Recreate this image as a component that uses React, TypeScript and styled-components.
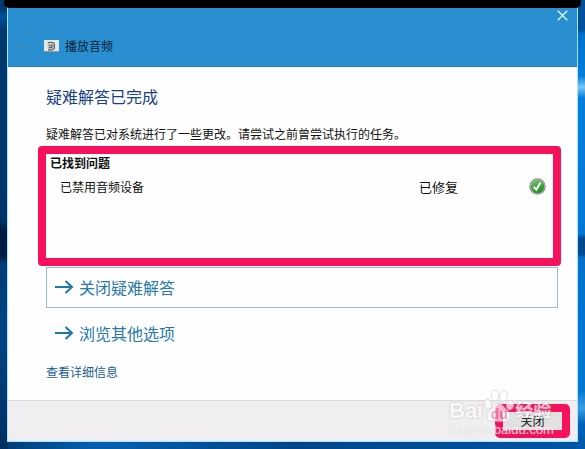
import React from "react";
import styled, { createGlobalStyle } from "styled-components";

const GlobalStyle = createGlobalStyle`
  *, *::before, *::after { box-sizing: border-box; }
  body {
    margin: 0;
    font-family: "Noto Sans CJK SC", sans-serif;
    font-size: 12px;
    line-height: 18px;
    color: #111;
  }
  h1, h2, p { margin: 0; }
  button { font: inherit; }
`;

const Desktop = styled.div`
  position: relative;
  display: flex;
  min-height: 100vh;
  padding: 7px;
  background:
    linear-gradient(180deg, #003a70 0, #003a70 10px, #00539b 16px, #00396f 30px, #003468 220px, #001c44 230px, #001c44 256px, #003c78 264px, #004384 340px, #002f60 449px) left / 8px 100% no-repeat,
    linear-gradient(180deg, #004f9a 0, #00509c 30px, #0070cc 34px, #0080dc 76px, #7cc4f2 87px, #0080dc 98px, #0078d6 234px, #004a90 238px, #004a90 254px, #0072ce 258px, #0078d4 390px, #3c9ce4 408px, #0060ba 424px, #0058ac 449px) right / 8px 100% no-repeat,
    linear-gradient(90deg, #003a74, #0660ae 16%, #00458a 50%, #0055a4);
`;

const TopEdge = styled.div`
  position: absolute;
  top: 0;
  left: 4px;
  right: 4px;
  height: 8px;
  border-radius: 0 0 5px 5px;
  background: #000;
`;

const Dialog = styled.main`
  display: flex;
  flex: 1;
  flex-direction: column;
  min-width: 0;
  border: 1px solid #a5e4fa;
  border-top: 0;
  background: #fefefe;
`;

const TitleBar = styled.header`
  display: flex;
  justify-content: space-between;
  height: 60px;
  background: #2a8fd0;
  border-bottom: 1px solid #2680b8;
`;

const TitleGroup = styled.div`
  display: flex;
  align-items: center;
  align-self: flex-end;
  height: 40px;
  padding-left: 8px;
`;

const IconButton = styled.button`
  display: grid;
  place-items: center;
  width: 30px;
  height: 17px;
  padding: 0;
  border: 0;
  background: none;
`;

const BackButton = styled(IconButton)`
  width: 12px;
  margin-right: 16px;
`;

const Title = styled.h1`
  margin-left: 6px;
  font-size: 12px;
  font-weight: 400;
  line-height: 18px;
  color: #0a2238;
`;

const Content = styled.section`
  display: flex;
  flex: 1;
  flex-direction: column;
  align-items: stretch;
  padding: 17px 19px 0 38px;
`;

const Heading = styled.h2`
  font-size: 16px;
  font-weight: 400;
  line-height: 24px;
  color: #173f86;
`;

const Message = styled.p`
  margin-top: 17px;
`;

const Problems = styled.div`
  height: 120px;
  margin: 3px -3px 0 -8px;
  border: 8px solid #f6115c;
  border-radius: 4px;
`;

const ProblemsTable = styled.table`
  width: 100%;
  border-collapse: collapse;
  text-align: left;

  th { padding: 0 4px; line-height: 18px; }
  td { padding: 3px 0 0; height: 26px; }
`;

const ProblemName = styled.td`
  && { padding-left: 14px; }
`;

const Status = styled.td`
  width: 110px;
  font-size: 13px;
`;

const StatusIcon = styled.td`
  width: 24px;

  svg { display: block; }
`;

const CommandLink = styled.button<{ $focused?: boolean }>`
  display: flex;
  align-items: center;
  gap: 5px;
  height: 41px;
  padding: 0 7px 2px;
  border: 1px solid ${(p) => (p.$focused ? "#9dbdce" : "transparent")};
  background: none;
  font-size: 16px;
  line-height: 24px;
  color: #2878a8;
`;

const Commands = styled.div`
  display: flex;
  flex-direction: column;
  gap: 5px;
  margin-top: 1px;
`;

const DetailsLink = styled.a`
  align-self: flex-start;
  margin-top: 9px;
  color: #1c5f93;
  text-decoration: none;
`;

const Footer = styled.footer`
  position: relative;
  display: flex;
  justify-content: flex-end;
  align-items: flex-start;
  height: 41px;
  padding: 3px 7px 0 0;
  border-top: 1px solid #dcdcde;
  background: #f0eef1;
`;

const CloseButton = styled.button`
  width: 75px;
  height: 34px;
  padding: 0;
  border: 8px solid #f6115c;
  border-radius: 5px;
  background: #e2e1e2;
  line-height: 16px;
  color: #111;
`;

const Watermark = styled.div`
  position: absolute;
  right: 14px;
  bottom: 4px;
  width: 114px;
  pointer-events: none;
  font-family: "Liberation Sans", "Noto Sans CJK SC", sans-serif;
  color: #fff;
  opacity: 0.7;
`;

const Brand = styled.div`
  display: flex;
  align-items: flex-end;
  font-size: 22px;
  line-height: 24px;
  font-weight: 700;
  white-space: nowrap;
  text-shadow: 0 0 2px #999;
`;

const PawMark = styled.span`
  display: grid;
  height: 34px;

  > * { grid-area: 1 / 1; }
`;

const PawLabel = styled.span`
  z-index: 1;
  align-self: end;
  justify-self: center;
  font-size: 14px;
  line-height: 18px;
  color: #e58aa9;
  text-shadow: none;
`;

const Experience = styled.span`
  font-size: 18px;
`;

const Site = styled.div`
  font-size: 13px;
  line-height: 14px;
  white-space: nowrap;
  text-shadow: 0 0 1px #aaa;
`;

const Arrow = () => (
  <svg width="20" height="16" viewBox="0 0 20 16" fill="none" stroke="#1e78a8" strokeWidth="2" aria-hidden="true">
    <path d="M1 8H18M11.5 2L18 8L11.5 14" />
  </svg>
);

const BackArrow = () => (
  <svg width="10" height="9" viewBox="0 0 10 9" fill="none" stroke="#4b86ad" aria-hidden="true">
    <path d="M9 4.5H2M5 1.5L2 4.5L5 7.5" />
  </svg>
);

const Cross = () => (
  <svg width="11" height="11" viewBox="0 0 11 11" fill="none" stroke="#dcfbff" strokeWidth="1.3" aria-hidden="true">
    <path d="M.7.7L10.3 10.3M10.3.7L.7 10.3" />
  </svg>
);

const AudioIcon = () => (
  <svg width="15" height="12" viewBox="0 0 15 12" aria-hidden="true">
    <rect width="15" height="12" fill="#e4e9ec" />
    <path d="M0 11.5H15" stroke="#8e9ca5" />
    <path d="M3.5 2L9 1.5L11 3V9.5L8.5 10.5H4Z" fill="#b4b7b8" />
    <path d="M4 2.5H9L10.5 4V8.5L8 10H4M5 5H8V7.5H5" fill="none" stroke="#5a5f62" />
    <path d="M5 3.8H7.5" stroke="#fff" />
  </svg>
);

const CheckIcon = () => (
  <svg width="17" height="17" viewBox="0 0 17 17" aria-label="已修复" role="img">
    <defs>
      <linearGradient id="green" x1="0" y1="0" x2="0.4" y2="1">
        <stop offset="0" stopColor="#8cc983" />
        <stop offset="0.48" stopColor="#4fab48" />
        <stop offset="1" stopColor="#27912a" />
      </linearGradient>
    </defs>
    <circle cx="8.5" cy="8.5" r="8.2" fill="#858b88" />
    <circle cx="8.5" cy="8.5" r="7.3" fill="#b4bdb5" />
    <circle cx="8.5" cy="8.5" r="6.7" fill="url(#green)" />
    <path d="M4.8 9L7.4 11.6L11.5 4.5" fill="none" stroke="#fff" strokeWidth="2" />
  </svg>
);

const Paw = () => (
  <svg width="32" height="34" viewBox="0 0 32 34" fill="#fff" stroke="#c4c4c8" strokeWidth=".8" aria-hidden="true">
    <ellipse cx="5" cy="15" rx="3.7" ry="5" transform="rotate(-12 5 15)" />
    <ellipse cx="12" cy="6.5" rx="3.8" ry="5.6" />
    <ellipse cx="20.5" cy="7" rx="3.8" ry="5.6" transform="rotate(12 20.5 7)" />
    <ellipse cx="27" cy="16" rx="3.7" ry="5" transform="rotate(12 27 16)" />
    <path d="M15.5 14C19.5 14 20.5 18.5 24.5 21.5C29 25 28 32 22 32.5C18 33 13.5 31.5 9.5 32.5C3.5 33 2 26 6.5 22C10 19 11 14 15.5 14Z" />
  </svg>
);

export default function App() {
  return (
    <>
      <GlobalStyle />
      <Desktop>
        <Dialog>
          <TitleBar>
            <TitleGroup>
              <BackButton aria-label="返回" disabled><BackArrow /></BackButton>
              <AudioIcon />
              <Title>播放音频</Title>
            </TitleGroup>
            <IconButton aria-label="关闭窗口"><Cross /></IconButton>
          </TitleBar>
          <Content>
            <Heading>疑难解答已完成</Heading>
            <Message>疑难解答已对系统进行了一些更改。请尝试之前曾尝试执行的任务。</Message>
            <Problems>
              <ProblemsTable>
                <thead>
                  <tr><th colSpan={3}>已找到问题</th></tr>
                </thead>
                <tbody>
                  <tr>
                    <ProblemName>已禁用音频设备</ProblemName>
                    <Status>已修复</Status>
                    <StatusIcon><CheckIcon /></StatusIcon>
                  </tr>
                </tbody>
              </ProblemsTable>
            </Problems>
            <Commands>
              <CommandLink $focused><Arrow />关闭疑难解答</CommandLink>
              <CommandLink><Arrow />浏览其他选项</CommandLink>
            </Commands>
            <DetailsLink href="#details">查看详细信息</DetailsLink>
          </Content>
          <Footer>
            <CloseButton>关闭</CloseButton>
            <Watermark>
              <Brand>
                Bai
                <PawMark><Paw /><PawLabel>du</PawLabel></PawMark>
                <Experience>经验</Experience>
              </Brand>
              <Site>jingyan.baidu.com</Site>
            </Watermark>
          </Footer>
        </Dialog>
        <TopEdge />
      </Desktop>
    </>
  );
}
